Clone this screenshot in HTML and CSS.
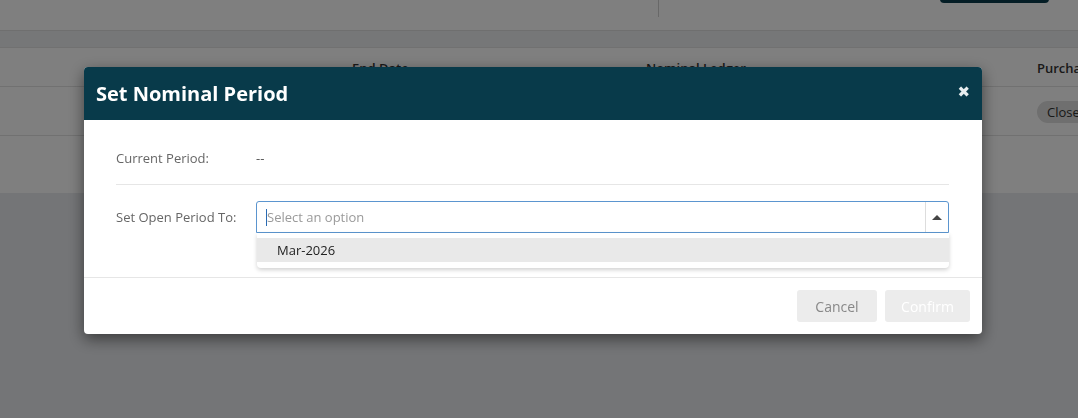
FILE: index.html
```html
<!DOCTYPE html>
<html lang="en">
<head>
  <meta charset="UTF-8">
  <meta name="viewport" content="width=device-width, initial-scale=1.0">
  <title>Nominal Periods</title>
  <link rel="stylesheet" href="styles.css">
</head>
<body>
  <div class="page">
    <div class="topbar">
      <div class="topbar-left"></div>
      <button class="topbar-button"></button>
    </div>
    <div class="band"></div>
    <div class="table">
      <div class="table-row table-head">
        <div></div>
        <div>End Date</div>
        <div>Nominal Ledger</div>
        <div>Purchase Ledger</div>
      </div>
      <div class="table-row table-body">
        <div></div>
        <div></div>
        <div></div>
        <div><span class="pill">Closed</span></div>
      </div>
      <div class="table-end"></div>
    </div>
  </div>

  <div class="overlay"></div>

  <div class="modal">
    <div class="modal-header">
      <h2>Set Nominal Period</h2>
      <span class="close">&#10006;</span>
    </div>
    <div class="modal-body">
      <div class="form-row current">
        <label>Current Period:</label>
        <span class="value">--</span>
      </div>
      <div class="form-row">
        <label>Set Open Period To:</label>
        <div class="select">
          <div class="select-box">
            <span class="caret"></span>
            <span class="placeholder">Select an option</span>
            <span class="select-arrow"><span class="triangle"></span></span>
          </div>
          <div class="dropdown">
            <div class="option active">Mar-2026</div>
          </div>
        </div>
      </div>
    </div>
    <div class="modal-footer">
      <button class="btn btn-cancel">Cancel</button>
      <button class="btn btn-confirm">Confirm</button>
    </div>
  </div>
</body>
</html>
```

FILE: styles.css
```css
* {
  margin: 0;
  padding: 0;
  box-sizing: border-box;
  font-family: "Open Sans", "Liberation Sans", sans-serif;
}

body {
  background-color: #e8eaee;
  color: #333;
  height: 100vh;
  overflow: hidden;
}

/* page behind the modal */
.page {
  background: #fff;
}

.topbar {
  display: flex;
  height: 31px;
  border-bottom: 1px solid #dedede;
}

.topbar-left {
  width: 659px;
  height: 17px;
  border-right: 1px solid #d0d0d0;
}

.topbar-button {
  margin-left: auto;
  margin-right: 29px;
  margin-top: -31px;
  width: 109px;
  height: 34px;
  border: none;
  border-radius: 4px;
  background: #083a4a;
}

.band {
  height: 16px;
  background: #eceef0;
}

.table-row {
  display: grid;
  grid-template-columns: 352px 294px 391px 1fr;
  align-items: center;
  border-bottom: 1px solid #e2e2e2;
  white-space: nowrap;
  overflow: hidden;
}

.table-head {
  height: 40px;
  font-size: 13px;
  font-weight: 600;
  border-top: 1px solid #e2e2e2;
  padding-top: 2px;
}

.table-body {
  height: 49px;
}

.pill {
  display: inline-block;
  background: #dedede;
  border-radius: 11px;
  padding: 2px 10px;
  font-size: 13px;
  line-height: 18px;
}

.table-end {
  height: 57px;
}

.overlay {
  position: fixed;
  inset: 0;
  background: rgba(0, 0, 0, 0.5);
}

/* modal */
.modal {
  position: fixed;
  top: 67px;
  left: 84px;
  width: 898px;
  background: #fff;
  border-radius: 4px;
  box-shadow: 0 5px 15px rgba(0, 0, 0, 0.5);
}

.modal-header {
  height: 53px;
  background: #083a4a;
  color: #fff;
  border-radius: 4px 4px 0 0;
  display: flex;
  align-items: center;
  justify-content: space-between;
  padding: 0 12px;
}

.modal-header h2 {
  font-size: 20px;
  font-weight: 700;
}

.close {
  font-size: 15px;
  color: #e8eef0;
  font-family: "DejaVu Sans", sans-serif;
  margin-top: -3px;
}

.modal-body {
  padding: 24px 33px 44px 32px;
}

.form-row {
  display: flex;
  align-items: center;
  font-size: 13px;
  color: #666;
}

.form-row label {
  width: 140px;
  flex-shrink: 0;
}

.form-row.current {
  height: 41px;
  padding-bottom: 13px;
  border-bottom: 1px solid #e6e6e6;
  margin-bottom: 16px;
}

.value {
  color: #555;
}

.select {
  position: relative;
  flex: 1;
}

.select-box {
  height: 32px;
  border: 1px solid #5b95cf;
  border-radius: 3px 3px 0 0;
  display: flex;
  align-items: center;
  padding-left: 9px;
}

.caret {
  width: 1px;
  height: 17px;
  background: #2a6bb3;
}

.placeholder {
  color: #9a9a9a;
  font-size: 13px;
}

.select-arrow {
  margin-left: auto;
  width: 23px;
  height: 100%;
  border-left: 1px solid #ddd;
  display: flex;
  align-items: center;
  justify-content: center;
}

.triangle {
  border-left: 5px solid transparent;
  border-right: 5px solid transparent;
  border-bottom: 5px solid #444;
}

.dropdown {
  position: absolute;
  top: 32px;
  left: 1px;
  right: 0;
  background: #fff;
  border-radius: 0 0 4px 4px;
  padding: 5px 0 6px;
  box-shadow: 0 2px 4px rgba(0, 0, 0, 0.18);
}

.option {
  height: 24px;
  line-height: 24px;
  padding-left: 20px;
  font-size: 13px;
  color: #222;
}

.option.active {
  background: #e9e9e9;
}

.modal-footer {
  border-top: 1px solid #e6e6e6;
  padding: 12px;
  display: flex;
  justify-content: flex-end;
  gap: 8px;
}

.btn {
  height: 32px;
  border: none;
  border-radius: 3px;
  background: #ececec;
  font-size: 14px;
}

.btn-cancel {
  width: 80px;
  color: #888;
}

.btn-confirm {
  width: 85px;
  color: #fff;
}
```
